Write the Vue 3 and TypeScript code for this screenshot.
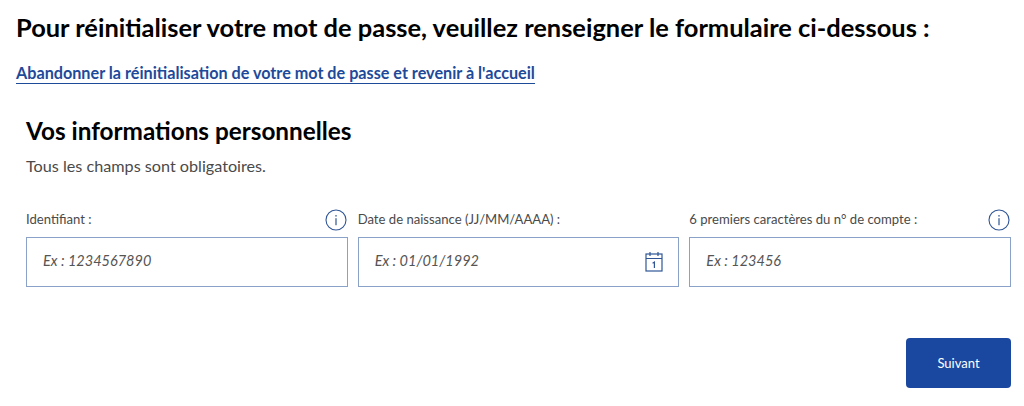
<script setup lang="ts">
interface Field { label: string; placeholder: string; info: boolean; calendar: boolean }
const fields: Field[] = [
  { label: 'Identifiant :', placeholder: 'Ex : 1234567890', info: true, calendar: false },
  { label: 'Date de naissance (JJ/MM/AAAA) :', placeholder: 'Ex : 01/01/1992', info: false, calendar: true },
  { label: '6 premiers caractères du n° de compte :', placeholder: 'Ex : 123456', info: true, calendar: false },
]
</script>

<template>
  <main class="page">
    <h1 class="title">Pour réinitialiser votre mot de passe, veuillez renseigner le formulaire ci-dessous :</h1>
    <a class="back" href="#">Abandonner la réinitialisation de votre mot de passe et revenir à l'accueil</a>
    <section class="card">
      <h2 class="subtitle">Vos informations personnelles</h2>
      <p class="note">Tous les champs sont obligatoires.</p>
      <div class="fields">
        <div v-for="f in fields" :key="f.label" class="field">
          <div class="label-row">
            <label class="label">{{ f.label }}</label>
            <svg v-if="f.info" class="info" viewBox="0 0 22 22" width="22" height="22" fill="none">
              <circle cx="11" cy="11" r="10" stroke="#2f5596" stroke-width="1.1" />
              <rect x="10.4" y="6" width="1.2" height="1.6" fill="#2f5596" />
              <rect x="10.4" y="9.2" width="1.2" height="7" fill="#2f5596" />
            </svg>
          </div>
          <div class="input">
            <span class="ph">{{ f.placeholder }}</span>
            <svg v-if="f.calendar" class="cal" viewBox="0 0 18 22" width="18" height="22" fill="none" stroke="#2f5596" stroke-width="1.2">
              <rect x="1" y="3" width="16" height="17" />
              <path d="M1 7.5h16M5 1v4M13 1v4" />
              <path d="M7.6 12.2 9.4 11v6" />
            </svg>
          </div>
        </div>
      </div>
      <div class="actions">
        <button class="next" type="button">Suivant</button>
      </div>
    </section>
  </main>
</template>

<style scoped>
.page { width: 1024px; height: 406px; box-sizing: border-box; padding: 12px 13px 0 16px; font-family: Lato, "Liberation Sans", sans-serif; color: #000; overflow: hidden; background: #fff; }
.title { margin: 0; font-size: 25.45px; line-height: 30px; font-weight: 700; white-space: nowrap; }
.back { display: inline-block; margin-top: 20px; font-size: 16.2px; line-height: 21px; font-weight: 700; color: #1e4a9a; text-decoration: none; border-bottom: 1px solid #1e4a9a; }
.card { padding: 32px 0 0 10px; }
.subtitle { margin: 0; font-size: 24.3px; line-height: 30px; font-weight: 700; }
.note { margin: 9px 0 0; font-size: 16.2px; line-height: 21px; color: #4a4a4a; }
.fields { display: grid; grid-template-columns: repeat(3, 1fr); column-gap: 10px; margin-top: 33px; }
.label-row { display: flex; justify-content: space-between; align-items: center; height: 22px; margin-bottom: 6px; }
.label { font-size: 13.1px; line-height: 20px; padding-bottom: 2px; color: #4a4a4a; }
.info { margin-right: 1px; }
.input { height: 50px; border: 1px solid #8aa2c8; display: flex; align-items: center; justify-content: space-between; padding: 0 15px 0 16px; box-sizing: border-box; }
.ph { font-size: 14.5px; line-height: 20px; padding-bottom: 2px; font-style: italic; color: #555; }
.actions { display: flex; justify-content: flex-end; margin-top: 51px; }
.next { width: 105px; height: 50px; border: 0; border-radius: 4px; background: #1a48a0; color: #fff; font: 13px Lato, "Liberation Sans", sans-serif; }
</style>
